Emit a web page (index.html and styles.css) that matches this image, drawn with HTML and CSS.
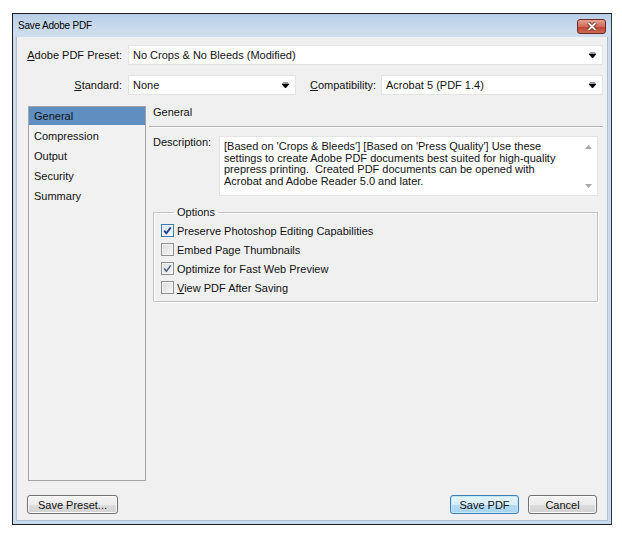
FILE: index.html
```html
<!DOCTYPE html>
<html lang="en">
<head>
<meta charset="UTF-8" />
<title>Save Adobe PDF</title>
<link rel="stylesheet" href="styles.css">
</head>
<body>
  <div class="window" role="dialog" aria-label="Save Adobe PDF">
    <div class="titlebar">
      <span class="title">Save Adobe PDF</span>
      <button class="close-btn" aria-label="Close">
        <svg width="10" height="9" viewBox="0 0 10 9">
          <path d="M1.5 1 L8.5 8 M8.5 1 L1.5 8" stroke="#5a1d16" stroke-width="3.4" fill="none" />
          <path d="M1.5 1 L8.5 8 M8.5 1 L1.5 8" stroke="#fff" stroke-width="1.8" fill="none" />
        </svg>
      </button>
    </div>

    <div class="client">
      <div class="field-row">
        <label class="field-label"><u>A</u>dobe PDF Preset:</label>
        <div class="combo combo-fill">
          <span>No Crops &amp; No Bleeds (Modified)</span>
          <svg class="combo-arrow" width="7" height="6" viewBox="0 0 7 6"><path d="M0 2 H7 L3.5 6 Z M1 0 H6" stroke="#000" stroke-width="0.8" fill="#000" /></svg>
        </div>
      </div>

      <div class="field-row row-second">
        <label class="field-label"><u>S</u>tandard:</label>
        <div class="combo combo-std">
          <span>None</span>
          <svg class="combo-arrow" width="7" height="6" viewBox="0 0 7 6"><path d="M0 2 H7 L3.5 6 Z M1 0 H6" stroke="#000" stroke-width="0.8" fill="#000" /></svg>
        </div>
        <label class="field-label compat-label"><u>C</u>ompatibility:</label>
        <div class="combo combo-fill">
          <span>Acrobat 5 (PDF 1.4)</span>
          <svg class="combo-arrow" width="7" height="6" viewBox="0 0 7 6"><path d="M0 2 H7 L3.5 6 Z M1 0 H6" stroke="#000" stroke-width="0.8" fill="#000" /></svg>
        </div>
      </div>

      <div class="main">
        <ul class="section-list">
          <li class="selected">General</li>
          <li>Compression</li>
          <li>Output</li>
          <li>Security</li>
          <li>Summary</li>
        </ul>

        <div class="panel">
          <div class="panel-title">General</div>

          <div class="desc-row">
            <span class="desc-label">Description:</span>
            <div class="desc-box">
              <div class="desc-text">[Based on 'Crops &amp; Bleeds'] [Based on 'Press Quality'] Use these<br>settings to create Adobe PDF documents best suited for high-quality<br>prepress printing.&nbsp; Created PDF documents can be opened with<br>Acrobat and Adobe Reader 5.0 and later.</div>
              <div class="desc-scroll">
                <svg width="7" height="4" viewBox="0 0 7 4"><path d="M0 4 L3.5 0 L7 4 Z" fill="#a8a8a8" /></svg>
                <svg width="7" height="4" viewBox="0 0 7 4"><path d="M0 0 L7 0 L3.5 4 Z" fill="#a8a8a8" /></svg>
              </div>
            </div>
          </div>

          <fieldset class="options">
            <legend>Options</legend>
            <label class="check-row">
              <span class="check check-focus">
                <svg width="11" height="11" viewBox="0 0 11 11"><path d="M2.2 5.6 L4.4 8.2 L8.8 2.4" stroke="#263f86" stroke-width="1.8" fill="none" /></svg>
              </span>
              Preserve Photoshop Editing Capabilities
            </label>
            <label class="check-row">
              <span class="check"></span>
              Embed Page Thumbnails
            </label>
            <label class="check-row">
              <span class="check">
                <svg width="11" height="11" viewBox="0 0 11 11"><path d="M2.2 5.6 L4.4 8.2 L8.8 2.4" stroke="#4b5f8c" stroke-width="1.5" fill="none" /></svg>
              </span>
              Optimize for Fast Web Preview
            </label>
            <label class="check-row">
              <span class="check"></span>
              <span><u>V</u>iew PDF After Saving</span>
            </label>
          </fieldset>
        </div>
      </div>

      <div class="footer">
        <button class="btn btn-preset">Save Preset...</button>
        <div class="btn-group">
          <button class="btn btn-default">Save PDF</button>
          <button class="btn">Cancel</button>
        </div>
      </div>
    </div>
  </div>
</body>
</html>
```

FILE: styles.css
```css
* {
  box-sizing: border-box;
}
body {
  margin: 0;
  background: #fff;
  color: #111;
  font-family: 'Liberation Sans', Arial, sans-serif;
  font-size: 11px;
}

/* Window frame */
.window {
  width: 600px;
  height: 512px;
  margin: 13px 0 0 12px;
  border: 1px solid #1d1d1d;
  border-right-color: #2b3a46;
  background: #cbdbec;
  display: flex;
  flex-direction: column;
}
.titlebar {
  height: 23px;
  flex-shrink: 0;
  display: flex;
  align-items: center;
  justify-content: space-between;
  padding: 0 5px 0 5px;
  background: linear-gradient(#b8cfe7, #c9daed 60%, #d0dfef);
}
.title {
  font-size: 10px;
  letter-spacing: -0.2px;
  color: #000;
}
.close-btn {
  width: 29px;
  height: 15px;
  padding: 0;
  border: 1px solid #6e2a22;
  border-radius: 3px;
  background: linear-gradient(#e4a497, #cf6a5a 50%, #bd4131 51%, #cb6b56);
  display: flex;
  align-items: center;
  justify-content: center;
  margin-top: 1px;
}

/* Client area */
.client {
  flex: 1;
  margin: 0 3px 3px;
  background: #f0f0f0;
  border: 1px solid #aebfd3;
  border-top: none;
  padding: 8px 4px 0 0;
  display: flex;
  flex-direction: column;
}
.field-row {
  display: flex;
  align-items: center;
  height: 20px;
}
.row-second {
  margin-top: 10px;
}
.field-label {
  width: 111px;
  text-align: right;
  padding-right: 6px;
  flex-shrink: 0;
}
.compat-label {
  width: 85px;
  padding-right: 5px;
}
.combo {
  height: 20px;
  background: #fff;
  border: 1px solid #e2e2e2;
  display: flex;
  align-items: center;
  justify-content: space-between;
  padding: 0 6px 0 4px;
}
.combo-fill {
  flex: 1;
}
.combo-std {
  width: 168px;
  flex-shrink: 0;
}
.combo-arrow {
  flex-shrink: 0;
}

/* Section list + panel */
.main {
  display: flex;
  margin-top: 11px;
  height: 375px;
}
.section-list {
  list-style: none;
  margin: 0 0 0 11px;
  padding: 0;
  width: 118px;
  border: 1px solid #a3a3a3;
  background: #f2f2f2;
}
.section-list li {
  height: 18px;
  line-height: 18px;
  padding-left: 5px;
  margin-bottom: 2px;
}
.section-list li.selected {
  background: #5f8fc1;
  color: #111;
}
.panel {
  flex: 1;
  margin-left: 3px;
  display: flex;
  flex-direction: column;
}
.panel-title {
  height: 21px;
  padding-left: 4px;
  line-height: 13px;
  border-bottom: 1px solid #b4b4b4;
  box-shadow: 0 1px 0 #fff;
}
.desc-row {
  display: flex;
  margin-top: 9px;
  padding: 0 5px 0 4px;
}
.desc-label {
  width: 66px;
  flex-shrink: 0;
  line-height: 13px;
}
.desc-box {
  flex: 1;
  height: 60px;
  background: #fff;
  border: 1px solid #e4e4e4;
  display: flex;
}
.desc-text {
  flex: 1;
  padding: 4px 0 0 4px;
  line-height: 11.6px;
  white-space: nowrap;
}
.desc-scroll {
  width: 17px;
  display: flex;
  flex-direction: column;
  justify-content: space-between;
  align-items: center;
  padding: 8px 0 7px;
}

/* Options group */
.options {
  margin: 10px 5px 0 4px;
  padding: 2px 0 4px 7px;
  border: 1px solid #c2c2c2;
  box-shadow: inset 1px 1px 0 #fff, 1px 1px 0 #fff;
  min-width: 0;
}
.options legend {
  margin-left: 13px;
  padding: 0 3px;
  line-height: 13px;
}
.check-row {
  display: flex;
  align-items: center;
  height: 19px;
}
.check {
  width: 13px;
  height: 13px;
  margin-right: 3px;
  border: 1px solid #8f8f8f;
  background: linear-gradient(135deg, #dcdcdc, #f7f7f7);
  box-shadow: inset 0 0 0 1px #f4f4f4;
  display: flex;
  align-items: center;
  justify-content: center;
  flex-shrink: 0;
}
.check-focus {
  border-color: #3d7bad;
  background: linear-gradient(135deg, #cfe7f6, #f2f9fd);
}

/* Footer buttons */
.footer {
  display: flex;
  justify-content: space-between;
  margin-top: 14px;
  padding: 0 6px 0 10px;
}
.btn-group {
  display: flex;
  gap: 9px;
}
.btn {
  height: 19px;
  width: 69px;
  padding: 0;
  font-family: inherit;
  font-size: 11px;
  color: #111;
  border: 1px solid #707070;
  border-radius: 3px;
  background: linear-gradient(#f4f4f4, #ebebeb 50%, #dddddd 51%, #d2d2d2);
  box-shadow: inset 0 0 0 1px #fbfbfb;
}
.btn-preset {
  width: 91px;
}
.btn-default {
  border-color: #3c7fb1;
  background: linear-gradient(#e6f4fc, #d6edfb 50%, #b7dcf4 51%, #a8d3f0);
  box-shadow: inset 0 0 0 1px #c2e7fb;
}
```
